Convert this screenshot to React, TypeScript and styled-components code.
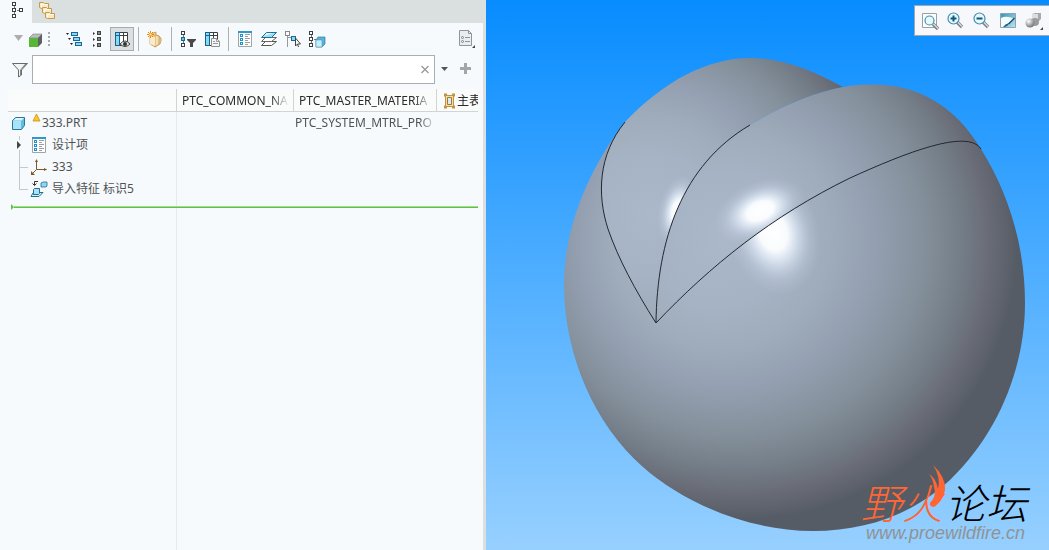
import React from 'react';
import styled, { createGlobalStyle, css } from 'styled-components';

const GlobalStyle = createGlobalStyle`
  * { box-sizing: border-box; }
  body {
    margin: 0;
    font-family: "Noto Sans", "Noto Sans CJK SC", sans-serif;
    font-size: 12px;
    line-height: 22px;
    color: #505354;
  }
  button, input { font: inherit; color: inherit; }
`;

const Page = styled.div`
  display: flex;
  min-height: 100vh;
`;

const Sidebar = styled.aside`
  display: flex;
  flex-direction: column;
  flex: 0 0 486px;
  min-width: 0;
  background: #dae0df;
  padding-right: 3px;
`;

const Tabs = styled.div`
  display: flex;
  height: 23px;
`;

const Tab = styled.button<{ $active?: boolean }>`
  width: 32px;
  padding: 0 0 3px;
  border: 0;
  display: flex;
  align-items: center;
  justify-content: center;
  background: ${(p) => (p.$active ? '#f6fafc' : 'transparent')};
`;

const Panel = styled.div`
  flex: 1;
  display: flex;
  flex-direction: column;
  background: #f6fafc;
`;

const Toolbar = styled.div`
  display: flex;
  align-items: center;
  height: 32px;
  padding: 0 4px 0 9px;
`;

const ToolButton = styled.button<{ $pressed?: boolean; $narrow?: boolean }>`
  width: ${(p) => (p.$narrow ? 18 : 24)}px;
  height: 24px;
  flex: none;
  padding: 0;
  display: flex;
  align-items: center;
  justify-content: center;
  border: 0;
  background: transparent;
  ${(p) =>
    p.$pressed &&
    css`
      background: #dcdfe1;
      border: 1px solid #a9abac;
    `}
`;

const Separator = styled.span`
  width: 1px;
  height: 24px;
  margin: 0 4px;
  background: #aeb1b2;
`;

const Grip = styled.span`
  width: 2px;
  height: 14px;
  margin: 0 12px 0 3px;
  background: repeating-linear-gradient(#a9adaf 0 2px, transparent 2px 4px);
`;

const Spacer = styled.span`
  flex: 1;
`;

const SearchRow = styled.div`
  display: flex;
  align-items: center;
  height: 29px;
  padding: 0 6px 0 8px;
`;

const FilterLabel = styled.label`
  display: flex;
  width: 24px;
  padding-left: 3px;
`;

const SearchBox = styled.div`
  display: flex;
  align-items: center;
  flex: 1;
  height: 29px;
  border: 1px solid #a8afb2;
  background: #fff;
`;

const SearchInput = styled.input`
  flex: 1;
  min-width: 0;
  border: 0;
  outline: 0;
  background: transparent;
  padding: 0 6px;
`;

const TreeArea = styled.div`
  flex: 1;
  margin: 5px 5px 0 8px;
  background: linear-gradient(#e5eaeb, #e5eaeb) 168px 0 / 1px 100% no-repeat;
`;

const Tree = styled.table`
  width: 100%;
  table-layout: fixed;
  border-collapse: separate;
  border-spacing: 0;
`;

const HeadCell = styled.th`
  height: 23px;
  padding: 1px 4px 0 5px;
  line-height: 21px;
  border-right: 1px solid #d0d4d5;
  border-bottom: 1px solid #d0d4d5;
  background: #fafbfb;
  color: #2b2b2b;
  font-weight: 400;
  text-align: left;
  &:last-child { border-right: 0; padding: 1px 0 0 6px; }
`;

const Cell = styled.td`
  height: 22px;
  padding: 0 0 0 1px;
`;

const Fade = styled.div`
  overflow: hidden;
  white-space: nowrap;
  mask-image: linear-gradient(to right, #000 calc(100% - 18px), transparent);
`;

const MasterHead = styled.div`
  display: flex;
  align-items: center;
  overflow: hidden;
  white-space: nowrap;
  svg { flex: none; }
`;

const Node = styled.div<{ $root?: boolean }>`
  display: flex;
  align-items: center;
  height: 22px;
  white-space: nowrap;
  padding-left: ${(p) => (p.$root ? 2 : 0)}px;
  margin-left: -1px;
`;

const NodeText = styled.span`
  padding-left: 4px;
`;

const WarningSlot = styled.span`
  display: flex;
  align-self: flex-start;
  padding: 1px 0 0 4px;
  & + span { padding-left: 1px; }
`;

const InsertLine = styled.div`
  display: flex;
  align-items: center;
  margin: 4px 0 0 3px;
  &::after {
    content: "";
    flex: 1;
    height: 2px;
    background: linear-gradient(#a3dc8c 50%, #5fc244 50%);
  }
`;

const Viewport = styled.main`
  position: relative;
  flex: 1;
  min-width: 0;
  overflow: hidden;
  background: linear-gradient(#078cff, #97d0ff);
`;

const Scene = styled.svg`
  position: absolute;
  inset: 0;
  width: 100%;
  height: 100%;
`;

const ViewBar = styled.div`
  position: absolute;
  top: 5px;
  right: 0;
  display: flex;
  align-items: center;
  gap: 2px;
  height: 31px;
  padding: 0 3px;
  border: 1px solid #a3a8ae;
  border-right: 0;
  background: #f7f8fb;
`;

const Watermark = styled.div`
  position: absolute;
  right: 16px;
  bottom: 7px;
  width: 172px;
`;

const Brand = styled.div`
  position: relative;
  font: italic 300 41px/44px "Noto Sans CJK SC", sans-serif;
  color: #ff6633;
  white-space: nowrap;
`;

const BrandDark = styled.span`
  padding-left: 2px;
  color: #000;
`;

const Flame = styled.svg`
  position: absolute;
  left: 67px;
  top: -14px;
`;

const SiteLink = styled.a`
  display: block;
  padding-left: 5px;
  font: italic 18px/20px "Liberation Sans", sans-serif;
  color: #8f9396;
  text-decoration: none;
`;

type IconProps = { w?: number; h?: number; children: React.ReactNode };
const Icon = ({ w = 18, h = 18, children }: IconProps) => (
  <svg width={w} height={h} viewBox={`0 0 ${w} ${h}`} fill="none" aria-hidden="true">
    {children}
  </svg>
);

const Boxes = ({ x, ys, stroke = '#3c3f40' }: { x: number; ys: number[]; stroke?: string }) => (
  <>
    {ys.map((y) => (
      <rect key={y} x={x + 0.5} y={y + 0.5} width="3" height="3" stroke={stroke} fill="#fff" />
    ))}
  </>
);

const TreeTabIcon = () => (
  <Icon>
    <path d="M7.500 5v2M7.500 11v2M10 9.500h3" stroke="#777" />
    <Boxes x={5} ys={[1, 7, 13]} />
    <Boxes x={12} ys={[7]} />
  </Icon>
);

const FoldersIcon = () => (
  <Icon>
    {[[0, 0], [3, 5], [6, 10]].map(([x, y]) => (
      <g key={x} transform={`translate(${x} ${y})`}>
        <path d="M.5 6.500v-5h4l1 1h4v5h-7z" fill="#fbe8bd" stroke="#c29a52" />
        <path d="M2.500 6.500v-3h6" stroke="#fffaf0" />
      </g>
    ))}
  </Icon>
);

const GreenCube = () => (
  <Icon>
    <path d="M2 8l4-4h9l-3 4z" fill="#b9bcbc" stroke="#7b7f7f" strokeWidth=".6" />
    <path d="M11 8l4-4v9l-4 4z" fill="#5d6161" />
    <path d="M2 8h9v9H2z" fill="#57b634" />
  </Icon>
);

const ExpandIcon = () => (
  <Icon>
    {[[0, 0], [2, 5], [4, 10]].map(([x, y]) => (
      <g key={x} transform={`translate(${x} ${y})`}>
        <path d="M1 3h3l-1.500 2z" fill="#222" />
        <rect x="6.500" y="2.500" width="6" height="3" fill="#8fd4f5" stroke="#146a92" />
      </g>
    ))}
  </Icon>
);

const ListIcon = () => (
  <Icon>
    {[1, 7, 13].map((y) => (
      <g key={y}>
        <path d={`M4 ${y + 1}l2 1.500l-2 1.500z`} fill="#333" />
        <rect x="8" y={y} width="4" height="4" fill="#444" />
        <rect x="9" y={y + 1} width="2" height="2" fill="#888" />
      </g>
    ))}
  </Icon>
);

const Table = () => (
  <>
    <path d="M6.500 2.500h8v13h-8zM10.500 2v14M6 5.500h9" fill="#fff" stroke="#3d4042" />
    <rect x="2.500" y="2.500" width="4" height="13" fill="#8ad6f8" stroke="#14638a" />
    <path d="M2 5.500h5" stroke="#14638a" />
  </>
);

const ColumnsEyeIcon = () => (
  <Icon>
    <Table />
    <path d="M7 14q5-6 10 0q-5 5-10 0z" fill="#e4e6e6" stroke="#444" />
    <circle cx="12" cy="14" r="2" fill="#333" />
  </Icon>
);

const NewFolderIcon = () => (
  <Icon>
    <path d="M4 4l6-2v3l3 1q3 2 2 5l-1 3-5 3-5-3z" fill="#e9c98c" stroke="#c49b57" strokeWidth=".8" />
    <path d="M9 5l4 1v8l-4 3z" fill="#f4dfb0" stroke="#b58a45" strokeWidth=".6" />
    <path d="M4 6l5 1v9l-5-2z" fill="#fbebc6" />
    <path d="M4.500 1v7M1 4.500h7M2 2l5 5M7 2l-5 5" stroke="#f0830f" />
    <circle cx="4.500" cy="4.500" r="1.300" fill="#ffe27a" />
  </Icon>
);

const TreeFilterIcon = () => (
  <Icon>
    <path d="M4.500 5v2M4.500 11v2" stroke="#777" />
    <Boxes x={2} ys={[1, 13]} />
    <rect x="2.500" y="7.500" width="3" height="3" fill="#5bc6f2" stroke="#146a92" />
    <path d="M8 9h9v1l-3 3v4h-3v-4l-3-3z" fill="#4a4a4a" />
  </Icon>
);

const ColumnsDocIcon = () => (
  <Icon>
    <Table />
    <path d="M8.500 8.500h5l3 3v5h-8z" fill="#f4f5f5" stroke="#8b8f90" />
    <path d="M13.500 8.500v3h3M10 11.500h2M10 13.500h5" stroke="#999d9e" />
  </Icon>
);

const DesignListIcon = () => (
  <Icon>
    <path d="M2.500 1.500h13v15h-13z" fill="#fff" stroke="#a0a4a6" />
    <path d="M2 2h14" stroke="#2c98cc" strokeWidth="2" />
    {[4, 8, 12].map((y) => (
      <g key={y}>
        <rect x="4.500" y={y + 0.5} width="2" height="2" stroke="#1a94cf" />
        <path d={`M9 ${y + 0.5}h5M9 ${y + 2.5}h3`} stroke="#9b9fa1" />
      </g>
    ))}
  </Icon>
);

const LayersIcon = () => (
  <Icon>
    <path d="M1.500 15.500l4-4h11l-5 4z" fill="#fff" stroke="#555" />
    <path d="M1.500 11.500l4-4h11l-5 4z" fill="#fff" stroke="#666" />
    <path d="M1.500 7.500l5-5h10l-5 5z" fill="#9edcf4" stroke="#1c7196" />
    <path d="M4 6l3-3h6z" fill="#e7f8ff" />
  </Icon>
);

const PickIcon = () => (
  <Icon>
    <path d="M3.500 6v11M4 7.500h4" stroke="#999" />
    <rect x="1.500" y="1.500" width="4" height="4" stroke="#888" fill="#fff" />
    <rect x="7.500" y="6.500" width="4" height="4" fill="#8ad6f8" stroke="#146a92" />
    <path d="M11.500 8v8l2-2 1 3M11.500 8l5 6h-3" fill="#fff" stroke="#444" />
  </Icon>
);

const TreeCubeIcon = () => (
  <Icon>
    <path d="M3.500 5v2M3.500 11v2M6 9.500h2" stroke="#777" />
    <Boxes x={1} ys={[1, 7, 13]} />
    <path d="M8 10l2-3h7v7l-3 3H8z" fill="#58b4d8" stroke="#1d7196" strokeWidth=".6" />
    <path d="M8 10h6v7H8z" fill="#c8eefc" stroke="#448ba9" strokeWidth=".5" />
  </Icon>
);

const SettingsDocIcon = () => (
  <Icon h={20}>
    <path d="M1.500 1.500h9l3 3v12h-12z" fill="#e9edf0" stroke="#8b969d" />
    <path d="M10.500 1.500v3h3" stroke="#8b969d" />
    <path d="M7 8.500h5M7 12.500h5" stroke="#8b969d" />
    <circle cx="4.500" cy="8.500" r="1" stroke="#7a858c" />
    <circle cx="4.500" cy="12.500" r="1" stroke="#7a858c" />
    <path d="M17 16v3h-3z" fill="#444" />
  </Icon>
);

const CubeIcon = () => (
  <Icon>
    <path d="M2.500 6.500l3-3h9v8l-3 4h-9z" fill="#5fbfe3" stroke="#2c7797" />
    <path d="M3 7h8v8H3z" fill="#a9e3fa" />
    <path d="M3 6.500h8.500l2.500-2.500H6z" fill="#dff5fe" />
  </Icon>
);

const AxesIcon = () => (
  <Icon>
    <path d="M6.500 2v9.500h10M6.500 11.500L1.500 16.500" stroke="#7c5a28" />
    <path d="M5 4l1.500-3 1.500 3zM14 10l3 1.500-3 1.500zM1 13v4h4z" fill="#7c5a28" />
  </Icon>
);

const ImportIcon = () => (
  <Icon>
    <path d="M11 3l2-1h4v4l-1 1h-5z" fill="#8ed6f4" stroke="#216f92" strokeWidth=".8" />
    <path d="M8 1.500H4.500V5M2.500 3.500l2 2 2-2" stroke="#333" />
    <path d="M3 13l-2 3.500h8l4-4h-3" fill="#d5f0fa" stroke="#216f92" />
    <path d="M3.500 9.500l1-1h5v5l-1 1h-5z" fill="#a8e2f9" stroke="#216f92" />
  </Icon>
);

const MasterIcon = () => (
  <Icon w={14} h={16}>
    <path d="M1 2h3M9 2h3M1 14h3M9 14h3" stroke="#c1914a" strokeWidth="3" />
    <path d="M2.500 2.500h8v11h-8z" fill="#f8dda0" stroke="#c1914a" />
    <path d="M4.500 4.500h4v7h-4z" fill="#cdeff6" stroke="#a9772b" />
  </Icon>
);

const FunnelIcon = () => (
  <Icon>
    <path d="M1.500 2.500h15l-6 6.500v5l-3 2V9z" fill="#f2f3f3" stroke="#666b6d" />
    <path d="M9 9l5-6h2l-6 6v5l-1 1z" fill="#85898a" />
  </Icon>
);

const Guide = ({ kind }: { kind: 'toggle' | 'mid' | 'end' }) => (
  <Icon w={22} h={22}>
    {kind === 'toggle' && (
      <>
        <path d="M11.500 2v4M11.500 16v6" stroke="#c4c8ca" />
        <path d="M9 7l4 4-4 4z" fill="#444" />
      </>
    )}
    {kind === 'mid' && <path d="M11.500 0v22M11.500 11.500H20" stroke="#c4c8ca" />}
    {kind === 'end' && <path d="M11.500 0v11.500H20" stroke="#c4c8ca" />}
  </Icon>
);

const Magnifier = ({ sign }: { sign?: 'plus' | 'minus' }) => (
  <Icon>
    {!sign && <path d="M1.500 1.500h14v14h-14z" fill="#fdfdfd" stroke="#9aa0a4" />}
    <g transform={sign ? 'translate(-1 -1)' : 'translate(1 1)'}>
      <path d="M11 11l5 5" stroke="#777c80" strokeWidth="3.400" />
      <path d="M11.500 11l4.500 4.500" stroke="#d4d7d9" strokeWidth="1.600" />
      <circle cx="7.500" cy="7.500" r={sign ? 5.5 : 4.5} fill="#e9f8fd" stroke="#4390ad" strokeWidth="1.200" />
      {sign && <path d={sign === 'plus' ? 'M4.500 7.500h6M7.500 4.500v6' : 'M4.500 7.500h6'} stroke="#0d5878" strokeWidth="2" />}
    </g>
  </Icon>
);

const RepaintIcon = () => (
  <Icon>
    <defs>
      <linearGradient id="repaint" x1="0" y1="0" x2="1" y2="1">
        <stop stopColor="#2f93b8" />
        <stop offset="1" stopColor="#c2e6f1" />
      </linearGradient>
    </defs>
    <path d="M1.500 1.500h15v14h-15z" fill="url(#repaint)" stroke="#8ea4ad" />
    <path d="M2 6q6-3 13 1l-5 4-6 4H2z" fill="#f5fcfe" />
    <path d="M15.500 6l-6 6" stroke="#194f70" strokeWidth="1.500" />
    <path d="M10 11q-1 4-6 4q2-3 6-4z" fill="#1b5f87" />
  </Icon>
);

const ShadingIcon = () => (
  <Icon w={20} h={20}>
    <defs>
      <radialGradient id="ball" cx=".35" cy=".3" r=".7">
        <stop stopColor="#fff" />
        <stop offset="1" stopColor="#777" />
      </radialGradient>
    </defs>
    <path d="M8 3l3-1h6v6l-3 3H8z" fill="#a7a9ab" />
    <path d="M8 3h6v8H8z" fill="#dcdedf" />
    <circle cx="11" cy="11" r="4" fill="#999c9e" />
    <circle cx="6" cy="12" r="4.500" fill="url(#ball)" />
    <path d="M19 16v3h-3z" fill="#444" />
  </Icon>
);

// A curve is a start point followed by cubic segments of three points each.
type Point = [number, number];
type Curve = Point[];

const segments = (c: Curve) => `C${c.slice(1).map((p) => p.join(' ')).join(' ')}`;
const line = (c: Curve) => `M${c[0].join(' ')}${segments(c)}`;
const shape = (...runs: Curve[]) => `M${runs[0][0].join(' ')}${runs.map(segments).join('')}Z`;
const back = (c: Curve): Curve => [...c].reverse();

const leftSeam: Curve = [[625, 122], [598, 155], [597, 195], [608, 229], [618, 258], [635, 290], [656, 323]];
const midSeam: Curve = [[656, 323], [657, 240], [682, 165], [750, 125]];
const fold: Curve = [[750, 125], [780, 107], [812, 93], [843, 87]];
const rightSeam: Curve = [[656, 323], [710, 266], [772, 216], [850, 178], [905, 153], [968, 128], [981, 149]];
const backTop: Curve = [[625, 122], [663, 82], [707, 58], [750, 58], [785, 58], [815, 72], [843, 87]];
const frontTop: Curve = [[843, 87], [905, 77], [950, 98], [981, 149]];
const hull: Curve = [
  [981, 149],
  [1008, 192], [1025, 245], [1025, 303],
  [1025, 365], [1000, 432], [950, 480],
  [912, 515], [865, 531], [813, 531],
  [745, 531], [680, 500], [643, 467],
  [595, 425], [564, 355], [564, 285],
  [564, 228], [588, 170], [625, 122],
];

const bodyPath = shape(leftSeam, rightSeam, hull);
const backPath = shape(leftSeam, midSeam, fold, back(backTop));
const frontPath = shape(midSeam, fold, frontTop, back(rightSeam));

const steelStops = (
  <>
    <stop offset="0" stopColor="#abb8ca" />
    <stop offset=".25" stopColor="#a6b3c4" />
    <stop offset=".4" stopColor="#9eacbb" />
    <stop offset=".54" stopColor="#94a0b1" />
    <stop offset=".7" stopColor="#84909b" />
    <stop offset=".82" stopColor="#747e88" />
    <stop offset=".91" stopColor="#696c77" />
    <stop offset="1" stopColor="#565c66" />
  </>
);

const Model = () => (
  <Scene viewBox="486 0 563 550" preserveAspectRatio="xMidYMid slice" role="img" aria-label="333.PRT">
    <defs>
      <radialGradient id="steel" gradientUnits="userSpaceOnUse" cx="744" cy="246" r="273" fx="705" fy="235">{steelStops}</radialGradient>
      <radialGradient id="steelFront" gradientUnits="userSpaceOnUse" cx="735" cy="250" r="280" fx="725" fy="240">{steelStops}</radialGradient>
      <radialGradient id="steelBack" gradientUnits="userSpaceOnUse" cx="650" cy="215" r="245">{steelStops}</radialGradient>
      <radialGradient id="shine">
        <stop offset="0" stopColor="#fff" />
        <stop offset=".3" stopColor="#fbfdff" stopOpacity=".97" />
        <stop offset=".5" stopColor="#e6f0fc" stopOpacity=".68" />
        <stop offset=".75" stopColor="#d0dcec" stopOpacity=".28" />
        <stop offset="1" stopColor="#c0cde0" stopOpacity="0" />
      </radialGradient>
      <clipPath id="bodyClip"><path d={bodyPath} /></clipPath>
      <clipPath id="backClip"><path d={backPath} /></clipPath>
      <clipPath id="frontClip"><path d={frontPath} /></clipPath>
    </defs>
    <path d={backPath} fill="url(#steelBack)" />
    <path d={bodyPath} fill="url(#steel)" />
    <path d={frontPath} fill="url(#steelFront)" />
    <g clipPath="url(#backClip)">
      <ellipse cx="678" cy="211" rx="20" ry="36" transform="rotate(12 678 211)" fill="url(#shine)" />
    </g>
    <g clipPath="url(#frontClip)">
      <ellipse cx="760" cy="211" rx="48" ry="30" transform="rotate(-24 760 211)" fill="url(#shine)" />
    </g>
    <g clipPath="url(#bodyClip)">
      <ellipse cx="773" cy="232" rx="46" ry="64" transform="rotate(-16 773 232)" fill="url(#shine)" />
    </g>
    <g fill="none" stroke="#25282d" strokeWidth="1">
      <path d={line(leftSeam)} />
      <path d={line(midSeam)} />
      <path d={line(rightSeam)} />
    </g>
  </Scene>
);

const tools = [
  [
    { label: '展开', icon: <ExpandIcon /> },
    { label: '列表', icon: <ListIcon /> },
    { label: '显示列', icon: <ColumnsEyeIcon />, pressed: true },
  ],
  [{ label: '新建组', icon: <NewFolderIcon /> }],
  [
    { label: '树过滤器', icon: <TreeFilterIcon /> },
    { label: '树列', icon: <ColumnsDocIcon /> },
  ],
  [
    { label: '设计项', icon: <DesignListIcon /> },
    { label: '层', icon: <LayersIcon /> },
    { label: '选择', icon: <PickIcon /> },
    { label: '零件', icon: <TreeCubeIcon /> },
  ],
];

const children = [
  { label: '设计项', guide: 'toggle' as const, icon: <DesignListIcon /> },
  { label: '333', guide: 'mid' as const, icon: <AxesIcon /> },
  { label: '导入特征 标识5', guide: 'end' as const, icon: <ImportIcon /> },
];

const views = [
  { label: '重新调整', icon: <Magnifier /> },
  { label: '放大', icon: <Magnifier sign="plus" /> },
  { label: '缩小', icon: <Magnifier sign="minus" /> },
  { label: '重画', icon: <RepaintIcon /> },
  { label: '显示样式', icon: <ShadingIcon /> },
];

export default function App() {
  return (
    <Page>
      <GlobalStyle />
      <Sidebar>
        <Tabs>
          <Tab $active aria-label="模型树"><TreeTabIcon /></Tab>
          <Tab aria-label="文件夹"><FoldersIcon /></Tab>
        </Tabs>
        <Panel>
          <Toolbar>
            <ToolButton $narrow aria-label="菜单">
              <Icon><path d="M5 5h9l-4.500 6z" fill="#aaaeb0" /></Icon>
            </ToolButton>
            <ToolButton $narrow aria-label="模型"><GreenCube /></ToolButton>
            <Grip />
            {tools.map((group, g) => (
              <React.Fragment key={g}>
                {g > 0 && <Separator />}
                {group.map((t) => (
                  <ToolButton key={t.label} aria-label={t.label} $pressed={'pressed' in t}>{t.icon}</ToolButton>
                ))}
              </React.Fragment>
            ))}
            <Spacer />
            <ToolButton aria-label="设置"><SettingsDocIcon /></ToolButton>
          </Toolbar>
          <SearchRow>
            <FilterLabel htmlFor="tree-search" aria-label="搜索"><FunnelIcon /></FilterLabel>
            <SearchBox>
              <SearchInput id="tree-search" type="text" />
              <ToolButton $narrow aria-label="清除">
                <Icon><path d="M5.500 5l7 7M12.500 5l-7 7" stroke="#95999b" strokeWidth="1.300" /></Icon>
              </ToolButton>
            </SearchBox>
            <ToolButton $narrow aria-label="历史">
              <Icon><path d="M6 6h7l-3.500 4z" fill="#555" /></Icon>
            </ToolButton>
            <ToolButton aria-label="添加">
              <Icon><path d="M9.500 2v11M4 7.500h11" stroke="#a3a6a7" strokeWidth="3" /></Icon>
            </ToolButton>
          </SearchRow>
          <TreeArea>
            <Tree>
              <colgroup>
                <col width="169" />
                <col width="117" />
                <col width="143" />
                <col />
              </colgroup>
              <thead>
                <tr>
                  <HeadCell />
                  <HeadCell><Fade>PTC_COMMON_NA</Fade></HeadCell>
                  <HeadCell><Fade>PTC_MASTER_MATERIA</Fade></HeadCell>
                  <HeadCell><MasterHead><MasterIcon />主表</MasterHead></HeadCell>
                </tr>
              </thead>
              <tbody>
                <tr>
                  <Cell>
                    <Node $root>
                      <CubeIcon />
                      <WarningSlot>
                        <Icon w={9} h={9}><path d="M4.500 1l3.500 7H1z" fill="#fbc52b" stroke="#c98f0c" strokeWidth=".8" /></Icon>
                      </WarningSlot>
                      <NodeText>333.PRT</NodeText>
                    </Node>
                  </Cell>
                  <Cell />
                  <Cell><Fade>PTC_SYSTEM_MTRL_PRO</Fade></Cell>
                  <Cell />
                </tr>
                {children.map((c) => (
                  <tr key={c.label}>
                    <Cell>
                      <Node>
                        <Guide kind={c.guide} />
                        {c.icon}
                        <NodeText>{c.label}</NodeText>
                      </Node>
                    </Cell>
                    <Cell />
                    <Cell />
                    <Cell />
                  </tr>
                ))}
              </tbody>
            </Tree>
            <InsertLine>
              <Icon w={3} h={6}><path d="M0 0l3 3-3 3z" fill="#5fc244" /></Icon>
            </InsertLine>
          </TreeArea>
        </Panel>
      </Sidebar>
      <Viewport>
        <Model />
        <ViewBar>
          {views.map((v) => (
            <ToolButton key={v.label} aria-label={v.label}>{v.icon}</ToolButton>
          ))}
        </ViewBar>
        <Watermark>
          <Brand>
            野火<BrandDark>论坛</BrandDark>
            <Flame width="20" height="44" viewBox="0 0 20 44" aria-hidden="true">
              <path d="M5 0Q18 12 17 25Q15 36 6 42Q1 41 2 38Q9 31 6 22Q5 14 1 9Q8 13 10 24Q13 12 5 0Z" fill="#ff6633" />
            </Flame>
          </Brand>
          <SiteLink href="#">www.proewildfire.cn</SiteLink>
        </Watermark>
      </Viewport>
    </Page>
  );
}
